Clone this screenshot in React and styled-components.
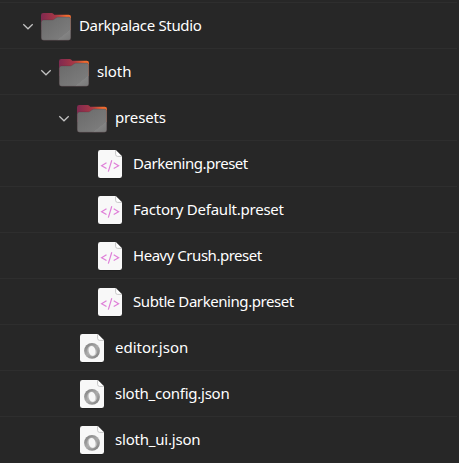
import React from 'react';
import styled, { createGlobalStyle } from 'styled-components';

const GlobalStyle = createGlobalStyle`
  html, body { margin: 0; background: #272727; }
  body { overflow: hidden; }
`;

const Tree = styled.div`
  box-sizing: border-box;
  width: 459px;
  height: 463px;
  padding: 2px 2px 0 0;
  overflow: hidden;
  background: #272727;
`;

const Row = styled.div`
  box-sizing: border-box;
  display: flex;
  align-items: center;
  height: 46px;
  border-top: 1px solid #2e2e2e;
  padding-left: ${(p) => p.$indent}px;
`;

const Chevron = styled.svg`
  flex: none;
  width: 12px;
  height: 13px;
  margin-right: 6px;
`;

const FolderArt = styled.svg`
  flex: none;
  width: 32px;
  height: 31px;
  margin-right: 7px;
`;

const FileArt = styled.svg`
  flex: none;
  width: 26px;
  height: 31px;
  margin-right: 10px;
`;

const Label = styled.span`
  color: #fff;
  font: 15px/21px "Noto Sans", "Open Sans", sans-serif;
  letter-spacing: ${(p) => p.$tracking}px;
  white-space: pre;
`;

function Folder() {
  return (
    <>
      <Chevron viewBox="0 0 12 13">
        <path d="M1.3 5.2 6 9.8 10.7 5.2" fill="none" stroke="#c4c4c4" strokeWidth="1.2" />
      </Chevron>
      <FolderArt viewBox="0 0 32 31">
        <defs>
          <linearGradient id="folder-tab" x1="0" x2="1">
            <stop offset="0" stopColor="#7f2950" />
            <stop offset="0.5" stopColor="#a83845" />
            <stop offset="0.85" stopColor="#f06c30" />
            <stop offset="1" stopColor="#ee6a30" />
          </linearGradient>
          <linearGradient id="folder-front" x1="0" y1="0" x2="1" y2="1">
            <stop offset="0" stopColor="#696969" />
            <stop offset="0.76" stopColor="#7b7b7b" />
            <stop offset="0.77" stopColor="#838383" />
            <stop offset="1" stopColor="#787878" />
          </linearGradient>
        </defs>
        <path d="M1 5.2Q1 3 3.2 3H11.6Q12.6 3 13.3 3.8L14.2 4.8H28.8Q31 4.8 31 7V20H1Z" fill="url(#folder-tab)" />
        <path d="M1.2 12.2Q1.2 9.9 3.5 9.9H12.2Q13.2 9.9 14 9.3L16 7.8Q16.9 7.1 18.2 7.1H28.5Q30.8 7.1 30.8 9.4V27.9Q30.8 30.3 28.4 30.3H3.6Q1.2 30.3 1.2 27.9Z" fill="url(#folder-front)" stroke="#50353c" strokeWidth="0.3" />
      </FolderArt>
    </>
  );
}

function File({ kind }) {
  return (
    <FileArt viewBox="0 0 26 31">
      <defs>
        <linearGradient id="ring" x1="0.1" y1="0" x2="0.9" y2="1">
          <stop offset="0" stopColor="#7c7c7c" />
          <stop offset="0.5" stopColor="#acacac" />
          <stop offset="1" stopColor="#7c7c7c" />
        </linearGradient>
        <linearGradient id="ring-inner" x1="1" y1="0" x2="0" y2="1">
          <stop offset="0" stopColor="#8a8a8a" />
          <stop offset="0.5" stopColor="#cfcfcf" />
          <stop offset="1" stopColor="#a0a0a0" />
        </linearGradient>
      </defs>
      <path d="M3.3 2.5H18.7L25 8.8V28.1Q25 30.6 22.7 30.6H3.3Q1 30.6 1 28.1V4.8Q1 2.5 3.3 2.5Z" fill="#181818" />
      <path d="M3.3 2H18.7L25 8.3V27.7Q25 30 22.7 30H3.3Q1 30 1 27.7V4.3Q1 2 3.3 2Z" fill="#f8f8f8" />
      <path d="M18.6 2V6.3Q18.6 8.4 20.7 8.4H25" fill="#fff" stroke="#c0c0c0" strokeWidth="0.9" />
      {kind === 'code' ? (
        <path d="M9.5 14.8 4.6 17.7 9.5 20.6M14.8 12.2 11.3 23.6M16.7 14.8 21.6 17.7 16.7 20.6" fill="none" stroke="#df7fd8" strokeWidth="1.2" />
      ) : (
        <>
          <circle cx="13" cy="18.8" r="7.9" fill="url(#ring)" />
          <ellipse cx="13.2" cy="18.9" rx="5" ry="5.6" fill="url(#ring-inner)" />
          <ellipse cx="13.1" cy="18.9" rx="3.4" ry="4.9" fill="#f7f7f7" transform="rotate(-10 13.1 18.9)" />
        </>
      )}
    </FileArt>
  );
}

const entries = [
  { name: 'Darkpalace Studio', kind: 'folder', indent: 22, tracking: -0.33 },
  { name: 'sloth', kind: 'folder', indent: 40, tracking: -0.1 },
  { name: 'presets', kind: 'folder', indent: 58, tracking: -0.15 },
  { name: 'Darkening.preset', kind: 'code', indent: 97, tracking: -0.47 },
  { name: 'Factory Default.preset', kind: 'code', indent: 97, tracking: -0.23 },
  { name: 'Heavy Crush.preset', kind: 'code', indent: 97, tracking: -0.47 },
  { name: 'Subtle Darkening.preset', kind: 'code', indent: 97, tracking: -0.43 },
  { name: 'editor.json', kind: 'json', indent: 79, tracking: 0 },
  { name: 'sloth_config.json', kind: 'json', indent: 79, tracking: -0.25 },
  { name: 'sloth_ui.json', kind: 'json', indent: 79, tracking: -0.2 },
];

export default function App() {
  return (
    <>
      <GlobalStyle />
      <Tree>
        {entries.map((e) => (
          <Row key={e.name} $indent={e.indent}>
            {e.kind === 'folder' ? <Folder /> : <File kind={e.kind} />}
            <Label $tracking={e.tracking}>{e.name}</Label>
          </Row>
        ))}
      </Tree>
    </>
  );
}
